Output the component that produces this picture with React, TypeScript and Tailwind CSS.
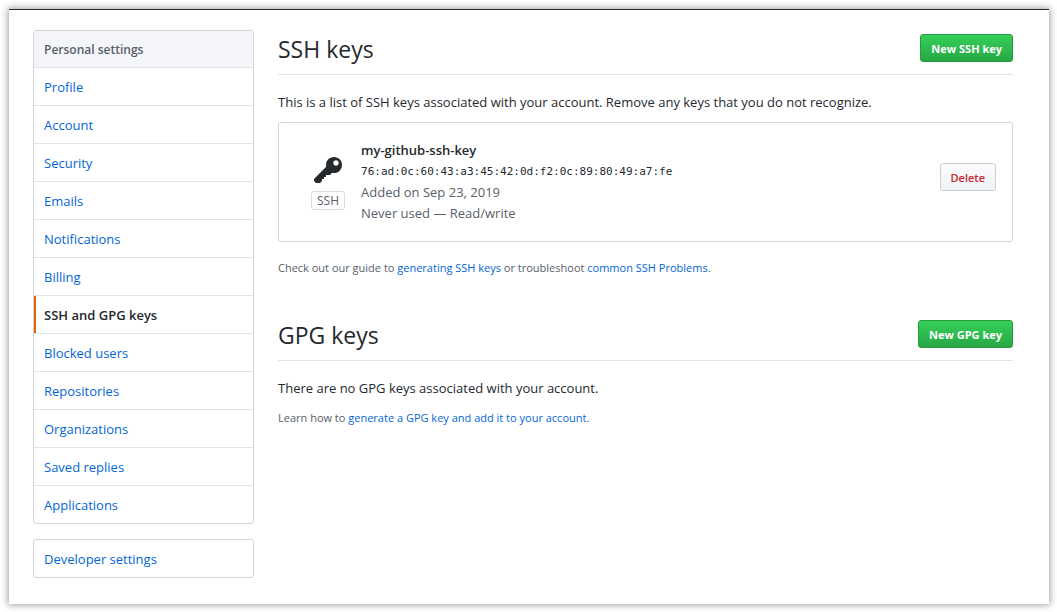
import type { ReactNode } from 'react';

const accountLinks = [
  'Profile',
  'Account',
  'Security',
  'Emails',
  'Notifications',
  'Billing',
  'SSH and GPG keys',
  'Blocked users',
  'Repositories',
  'Organizations',
  'Saved replies',
  'Applications',
];

const current = 'SSH and GPG keys';

function MenuLink({ label }: { label: string }) {
  const active = label === current;
  return (
    <a
      href="#"
      aria-current={active ? 'page' : undefined}
      className={
        active
          ? 'block border-l-2 border-l-[#e36209] pt-[9px] pr-2.5 pb-[7px] pl-2 font-semibold text-[#24292e]'
          : 'block px-2.5 pt-[9px] pb-[7px] text-[#0366d6] hover:bg-[#f6f8fa]'
      }
    >
      {label}
    </a>
  );
}

function Sidebar() {
  return (
    <aside className="flex w-[221px] shrink-0 flex-col gap-[15px]">
      <nav
        aria-label="Personal settings"
        className="overflow-hidden rounded-[3px] border border-[#d1d5da] bg-white"
      >
        <h3 className="border-b border-[#e1e4e8] bg-[#f3f5f8] px-2.5 pt-[9px] pb-[7px] text-xs leading-5 font-semibold text-[#586069]">
          Personal settings
        </h3>
        <ul className="divide-y divide-[#e1e4e8]">
          {accountLinks.map((label) => (
            <li key={label}>
              <MenuLink label={label} />
            </li>
          ))}
        </ul>
      </nav>
      <nav aria-label="Developer" className="rounded-[3px] border border-[#d1d5da] bg-white">
        <MenuLink label="Developer settings" />
      </nav>
    </aside>
  );
}

function SectionHead({ title, action }: { title: string; action: string }) {
  return (
    <div className="flex items-start justify-between border-b border-[#e1e4e8] pb-[7px]">
      <h2 className="pt-px text-[23px] leading-9">{title}</h2>
      <button
        type="button"
        className="mt-1 rounded-[3px] border border-[#28993f] bg-linear-to-b from-[#34d058] to-[#28a745] px-2.5 pt-1 pb-0.5 text-[11px] leading-5 font-bold text-white"
      >
        {action}
      </button>
    </div>
  );
}

function TextLink({ children }: { children: ReactNode }) {
  return (
    <a href="#" className="text-[#0366d6] hover:underline">
      {children}
    </a>
  );
}

function KeyIcon() {
  return (
    <svg viewBox="0 0 14 16" className="h-8 w-7" fill="currentColor" aria-hidden="true">
      <path
        fillRule="evenodd"
        d="M12.83 2.17C12.08 1.42 11.14 1.03 10 1c-1.13.03-2.08.42-2.83 1.17S6.04 3.86 6.01 5c0 .3.03.59.09.89L0 12v1l1 1h2l1-1v-1h1v-1h1v-1h2l1.09-1.11c.3.08.59.11.91.11 1.14-.03 2.08-.42 2.83-1.17S13.97 6.14 14 5c-.03-1.14-.42-2.08-1.17-2.83zM11 5.38c-.77 0-1.38-.61-1.38-1.38 0-.77.61-1.38 1.38-1.38.77 0 1.38.61 1.38 1.38 0 .77-.61 1.38-1.38 1.38z"
      />
    </svg>
  );
}

export default function App() {
  return (
    <div className="min-h-screen bg-white pt-[9px] pr-2 pb-2 pl-[9px] font-['Open_Sans','Noto_Sans',sans-serif] text-[13px] leading-[21px] text-[#24292e]">
      <div className="flex gap-6 border-t border-[#24292e] bg-white pt-5 pr-9 pb-[26px] pl-6 shadow-[0_0_7px_1px_rgba(0,0,0,0.38)]">
        <Sidebar />
        <main className="min-w-0 flex-1">
          <section>
            <SectionHead title="SSH keys" action="New SSH key" />
            <p className="mt-[17px]">
              This is a list of SSH keys associated with your account. Remove any keys that you do not recognize.
            </p>
            <div className="mt-[9px] flex items-start rounded-[3px] border border-[#d1d5da] py-[17px] pr-4 pl-8">
              <div className="mt-[15px] flex flex-col items-center gap-1">
                <KeyIcon />
                <span className="rounded-[3px] border border-[#d9dcdf] px-[5px] pt-px text-xs leading-4 text-[#586069]">
                  SSH
                </span>
              </div>
              <div className="ml-4 flex-1">
                <strong className="block font-semibold">my-github-ssh-key</strong>
                <code className="block pt-px font-['DejaVu_Sans_Mono',monospace] text-[11px] leading-5">
                  76:ad:0c:60:43:a3:45:42:0d:f2:0c:89:80:49:a7:fe
                </code>
                <span className="block text-[#586069]">Added on Sep 23, 2019</span>
                <span className="block text-[#586069]">Never used — Read/write</span>
              </div>
              <button
                type="button"
                className="mt-[23px] rounded-[3px] border border-[#cacdd1] bg-linear-to-b from-[#fafbfc] to-[#eff3f6] px-2.5 pt-1 pb-0.5 text-[11px] leading-5 font-semibold text-[#cb2431]"
              >
                Delete
              </button>
            </div>
            <p className="mt-4 text-[11px] leading-5 text-[#586069]">
              Check out our guide to <TextLink>generating SSH keys</TextLink> or troubleshoot{' '}
              <TextLink>common SSH Problems</TextLink>.
            </p>
          </section>
          <section className="mt-[38px]">
            <SectionHead title="GPG keys" action="New GPG key" />
            <p className="mt-[17px]">There are no GPG keys associated with your account.</p>
            <p className="mt-[9px] text-[11px] leading-5 text-[#586069]">
              Learn how to <TextLink>generate a GPG key and add it to your account</TextLink>.
            </p>
          </section>
        </main>
      </div>
    </div>
  );
}
